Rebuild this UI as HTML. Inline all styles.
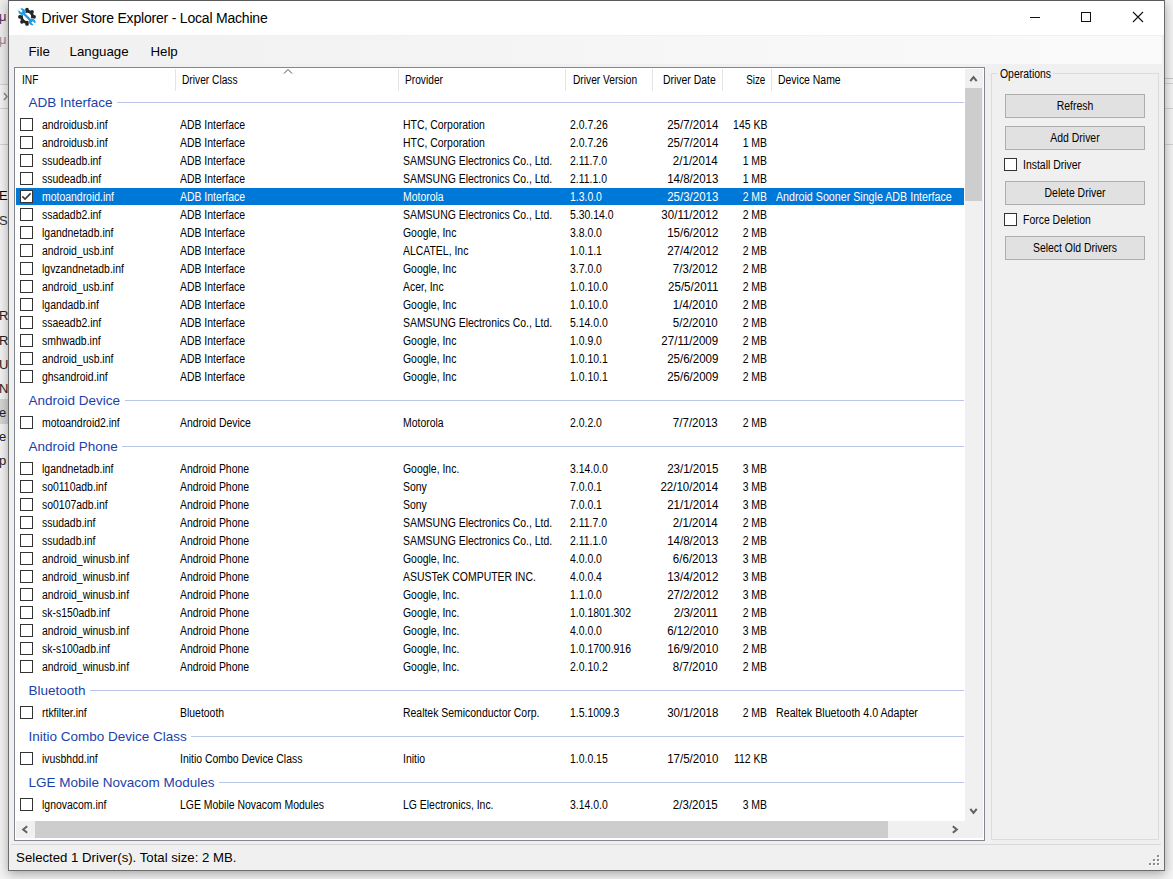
<!DOCTYPE html>
<html><head><meta charset="utf-8"><style>
html,body{margin:0;padding:0;}
body{width:1173px;height:879px;overflow:hidden;position:relative;background:#efefef;font-family:"Liberation Sans",sans-serif;color:#000;}
.abs{position:absolute;box-sizing:content-box;}
.clip{overflow:hidden;}
.tx{position:absolute;white-space:nowrap;color:#000;}
.gh{position:absolute;z-index:2;background:#fff;padding-right:4.5px;padding-left:12.5px;left:16px;font-size:13.5px;line-height:13.5px;color:#1b3faa;white-space:nowrap;transform:translateY(-11.4px);}
.gl{position:absolute;left:16px;width:948px;height:1px;background:#b9c6e8;}
.row{position:absolute;left:0;width:1173px;height:18px;}
.row .t{position:absolute;top:0;font-size:12px;line-height:19px;white-space:nowrap;color:#000;transform:scaleX(0.87);transform-origin:0 0;}
.row .t.r{transform-origin:100% 0;}
.row .t.d{transform:scaleX(0.96);}
.row .t.dv{transform:scaleX(0.89);}
.row.sel::before{content:"";position:absolute;left:16px;width:948px;top:0;height:17px;background:#0078d7;}
.row.sel .t{color:#fff;}
.cb{position:absolute;left:20px;top:2px;width:11px;height:11px;border:1px solid #333;background:#fff;}
.ckm{position:absolute;left:20px;top:2px;}
.btn{background:#e1e1e1;border:1px solid #adadad;}
.cbx{width:11px;height:11px;border:1px solid #333;background:#fff;}
</style></head><body>
<div class="abs" style="left:0px;top:0px;width:8px;height:879px;background:#f3f3f3;"></div>
<div class="abs" style="left:1165px;top:0px;width:8px;height:879px;background:#f2f2f2;"></div>
<div class="abs" style="left:0px;top:871px;width:1173px;height:8px;background:#f4f4f4;"></div>
<div class="abs" style="left:0px;top:0px;width:8px;height:84px;background:#ececec;"></div>
<div class="abs" style="left:0px;top:84px;width:8px;height:1px;background:#d2d2d2;"></div>
<div class="abs" style="left:0px;top:108px;width:8px;height:1px;background:#d2d2d2;"></div>
<div class="abs" style="left:0px;top:144px;width:8px;height:1px;background:#d2d2d2;"></div>
<svg class="abs" style="left:0;top:90px" width="8" height="12" viewBox="0 0 8 12"><path d="M4,3 L7,6.5 L4,10" fill="none" stroke="#8a8a8a" stroke-width="1.5"/></svg>
<div class="abs" style="left:0px;top:399px;width:8px;height:25px;background:#d4d4d4;"></div>
<div class="tx" style="left:-1px;top:10.00px;font-size:13px;line-height:13px;color:#503060;">μ</div>
<div class="tx" style="left:-1px;top:33.00px;font-size:13px;line-height:13px;color:#9a8a90;">μ</div>
<div class="tx" style="left:-1px;top:189.00px;font-size:13px;line-height:13px;color:#000;">E</div>
<div class="tx" style="left:-1px;top:214.00px;font-size:13px;line-height:13px;color:#333;">S</div>
<div class="tx" style="left:-1px;top:309.00px;font-size:13px;line-height:13px;color:#222;">R</div>
<div class="tx" style="left:-1px;top:334.00px;font-size:13px;line-height:13px;color:#222;">R</div>
<div class="tx" style="left:-1px;top:358.00px;font-size:13px;line-height:13px;color:#222;">U</div>
<div class="tx" style="left:-1px;top:382.00px;font-size:13px;line-height:13px;color:#222;">N</div>
<div class="tx" style="left:-1px;top:406.00px;font-size:13px;line-height:13px;color:#222;">e</div>
<div class="tx" style="left:-1px;top:430.00px;font-size:13px;line-height:13px;color:#222;">e</div>
<div class="tx" style="left:-1px;top:454.00px;font-size:13px;line-height:13px;color:#222;">p</div>
<div class="abs" style="left:1165px;top:78px;width:8px;height:1px;background:#c8c8c8;"></div>
<div class="abs" style="left:1165px;top:83px;width:8px;height:1px;background:#d0d0d0;"></div>
<div class="abs" style="left:1165px;top:108px;width:8px;height:1px;background:#d0d0d0;"></div>
<div class="abs" style="left:1165px;top:144px;width:8px;height:1px;background:#d0d0d0;"></div>
<div class="abs" style="left:8px;top:0;width:1155px;height:869px;border:1px solid #6c6c6c;border-top-color:#5a5a5a;background:#f0f0f0;box-shadow:0 3px 10px rgba(0,0,0,0.32)"></div>
<div class="abs" style="left:9px;top:1px;width:1155px;height:34px;background:#fff;"></div>
<svg class="abs" style="left:17px;top:7px" width="20" height="20" viewBox="0 0 20 20">
<g transform="translate(10,9.8)">
<circle r="5.6" fill="none" stroke="#262626" stroke-width="2.9"/>
<g fill="#262626"><circle cx="7.10" cy="0.00" r="1.85"/><circle cx="5.02" cy="5.02" r="1.85"/><circle cx="0.00" cy="7.10" r="1.85"/><circle cx="-5.02" cy="5.02" r="1.85"/><circle cx="-7.10" cy="0.00" r="1.85"/><circle cx="-5.02" cy="-5.02" r="1.85"/><circle cx="-0.00" cy="-7.10" r="1.85"/><circle cx="5.02" cy="-5.02" r="1.85"/></g>
<g transform="rotate(-45)">
<g fill="#fff"><rect x="-1.6" y="-7" width="3.2" height="14"/><circle cx="0" cy="-7.4" r="3.6"/><circle cx="0" cy="7.4" r="3.6"/></g>
<g fill="#1a9be8"><rect x="-1.15" y="-7" width="2.3" height="14"/><circle cx="0" cy="-7.4" r="3.2"/><circle cx="0" cy="7.4" r="3.2"/></g>
<g fill="#fff"><rect x="-1.1" y="-11" width="2.2" height="3.9" rx="0.5"/><rect x="-1.1" y="7.1" width="2.2" height="3.9" rx="0.5"/></g>
</g>
</g></svg>
<div class="tx" style="left:41.5px;top:10.95px;font-size:14px;line-height:14px;letter-spacing:-0.2px;color:#000;">Driver Store Explorer - Local Machine</div>
<div class="abs" style="left:1030px;top:17px;width:10px;height:1px;background:#111;"></div>
<div class="abs" style="left:1081px;top:12px;width:8px;height:8px;border:1px solid #111"></div>
<svg class="abs" style="left:1132px;top:11px" width="12" height="12" viewBox="0 0 12 12"><path d="M1 1L11 11M11 1L1 11" stroke="#111" stroke-width="1.1"/></svg>
<div class="abs" style="left:9px;top:35px;width:1155px;height:29px;background:#f0f0f0;"></div>
<div class="abs" style="left:9px;top:36px;width:1153px;height:28px;background:linear-gradient(90deg,#f0f0f0 0,#f3f3f3 30%,#f7f7f7 60%,#fafafa 100%);"></div>
<div class="tx" style="left:28.4px;top:44.64px;font-size:13.3px;line-height:13.3px;">File</div>
<div class="tx" style="left:69.5px;top:44.64px;font-size:13.3px;line-height:13.3px;">Language</div>
<div class="tx" style="left:150.4px;top:44.64px;font-size:13.3px;line-height:13.3px;">Help</div>
<div class="abs" style="left:14px;top:67px;width:969px;height:772px;border:1px solid #828790;background:#fff"></div>
<div class="abs" style="left:175px;top:69px;width:1px;height:22px;background:#e5e5e5;"></div>
<div class="abs" style="left:398px;top:69px;width:1px;height:22px;background:#e5e5e5;"></div>
<div class="abs" style="left:565px;top:69px;width:1px;height:22px;background:#e5e5e5;"></div>
<div class="abs" style="left:652px;top:69px;width:1px;height:22px;background:#e5e5e5;"></div>
<div class="abs" style="left:722px;top:69px;width:1px;height:22px;background:#e5e5e5;"></div>
<div class="abs" style="left:771px;top:69px;width:1px;height:22px;background:#e5e5e5;"></div>
<div class="tx" style="left:22px;top:73.84px;font-size:12px;line-height:12px;transform:scaleX(0.85);transform-origin:0 0;">INF</div>
<div class="tx" style="left:182px;top:73.84px;font-size:12px;line-height:12px;transform:scaleX(0.85);transform-origin:0 0;">Driver Class</div>
<div class="tx" style="left:404.8px;top:73.84px;font-size:12px;line-height:12px;transform:scaleX(0.85);transform-origin:0 0;">Provider</div>
<div class="tx" style="left:572.5px;top:73.84px;font-size:12px;line-height:12px;transform:scaleX(0.85);transform-origin:0 0;">Driver Version</div>
<div class="tx" style="left:662.7px;top:73.84px;font-size:12px;line-height:12px;transform:scaleX(0.87);transform-origin:0 0;">Driver Date</div>
<div class="tx" style="right:408px;top:73.84px;font-size:12px;line-height:12px;transform:scaleX(0.82);transform-origin:100% 0;">Size</div>
<div class="tx" style="left:778px;top:73.84px;font-size:12px;line-height:12px;transform:scaleX(0.87);transform-origin:0 0;">Device Name</div>
<svg class="abs" style="left:283px;top:68px" width="10" height="7" viewBox="0 0 10 7"><path d="M1 5.5L5 1.5L9 5.5" fill="none" stroke="#4a4a4a" stroke-width="1"/></svg>
<div class="abs clip" style="left:16px;top:69px;width:949px;height:752px">
<div class="abs" style="left:-16px;top:-69px;width:1173px;height:879px">
<div class="gh" style="top:107px">ADB Interface</div>
<div class="gl" style="top:102px"></div>
<div class="row" style="top:116px"><span class="cb"></span><span class="t" style="left:41.5px">androidusb.inf</span><span class="t" style="left:180px">ADB Interface</span><span class="t" style="left:403px">HTC, Corporation</span><span class="t" style="left:570px">2.0.7.26</span><span class="t r d" style="right:455px">25/7/2014</span><span class="t r" style="right:406px">145 KB</span></div>
<div class="row" style="top:134px"><span class="cb"></span><span class="t" style="left:41.5px">androidusb.inf</span><span class="t" style="left:180px">ADB Interface</span><span class="t" style="left:403px">HTC, Corporation</span><span class="t" style="left:570px">2.0.7.26</span><span class="t r d" style="right:455px">25/7/2014</span><span class="t r" style="right:406px">1 MB</span></div>
<div class="row" style="top:152px"><span class="cb"></span><span class="t" style="left:41.5px">ssudeadb.inf</span><span class="t" style="left:180px">ADB Interface</span><span class="t" style="left:403px">SAMSUNG Electronics Co., Ltd.</span><span class="t" style="left:570px">2.11.7.0</span><span class="t r d" style="right:455px">2/1/2014</span><span class="t r" style="right:406px">1 MB</span></div>
<div class="row" style="top:170px"><span class="cb"></span><span class="t" style="left:41.5px">ssudeadb.inf</span><span class="t" style="left:180px">ADB Interface</span><span class="t" style="left:403px">SAMSUNG Electronics Co., Ltd.</span><span class="t" style="left:570px">2.11.1.0</span><span class="t r d" style="right:455px">14/8/2013</span><span class="t r" style="right:406px">1 MB</span></div>
<div class="row sel" style="top:188px"><span class="cb"></span><svg class="ckm" width="13" height="13" viewBox="0 0 13 13"><path d="M2.3,6.4 L5,9.1 L10.6,3.4" fill="none" stroke="#3a3a3a" stroke-width="1.5"/></svg><span class="t" style="left:41.5px">motoandroid.inf</span><span class="t" style="left:180px">ADB Interface</span><span class="t" style="left:403px">Motorola</span><span class="t" style="left:570px">1.3.0.0</span><span class="t r d" style="right:455px">25/3/2013</span><span class="t r" style="right:406px">2 MB</span><span class="t dv" style="left:776px">Android Sooner Single ADB Interface</span></div>
<div class="row" style="top:206px"><span class="cb"></span><span class="t" style="left:41.5px">ssadadb2.inf</span><span class="t" style="left:180px">ADB Interface</span><span class="t" style="left:403px">SAMSUNG Electronics Co., Ltd.</span><span class="t" style="left:570px">5.30.14.0</span><span class="t r d" style="right:455px">30/11/2012</span><span class="t r" style="right:406px">2 MB</span></div>
<div class="row" style="top:224px"><span class="cb"></span><span class="t" style="left:41.5px">lgandnetadb.inf</span><span class="t" style="left:180px">ADB Interface</span><span class="t" style="left:403px">Google, Inc</span><span class="t" style="left:570px">3.8.0.0</span><span class="t r d" style="right:455px">15/6/2012</span><span class="t r" style="right:406px">2 MB</span></div>
<div class="row" style="top:242px"><span class="cb"></span><span class="t" style="left:41.5px">android_usb.inf</span><span class="t" style="left:180px">ADB Interface</span><span class="t" style="left:403px">ALCATEL, Inc</span><span class="t" style="left:570px">1.0.1.1</span><span class="t r d" style="right:455px">27/4/2012</span><span class="t r" style="right:406px">2 MB</span></div>
<div class="row" style="top:260px"><span class="cb"></span><span class="t" style="left:41.5px">lgvzandnetadb.inf</span><span class="t" style="left:180px">ADB Interface</span><span class="t" style="left:403px">Google, Inc</span><span class="t" style="left:570px">3.7.0.0</span><span class="t r d" style="right:455px">7/3/2012</span><span class="t r" style="right:406px">2 MB</span></div>
<div class="row" style="top:278px"><span class="cb"></span><span class="t" style="left:41.5px">android_usb.inf</span><span class="t" style="left:180px">ADB Interface</span><span class="t" style="left:403px">Acer, Inc</span><span class="t" style="left:570px">1.0.10.0</span><span class="t r d" style="right:455px">25/5/2011</span><span class="t r" style="right:406px">2 MB</span></div>
<div class="row" style="top:296px"><span class="cb"></span><span class="t" style="left:41.5px">lgandadb.inf</span><span class="t" style="left:180px">ADB Interface</span><span class="t" style="left:403px">Google, Inc</span><span class="t" style="left:570px">1.0.10.0</span><span class="t r d" style="right:455px">1/4/2010</span><span class="t r" style="right:406px">2 MB</span></div>
<div class="row" style="top:314px"><span class="cb"></span><span class="t" style="left:41.5px">ssaeadb2.inf</span><span class="t" style="left:180px">ADB Interface</span><span class="t" style="left:403px">SAMSUNG Electronics Co., Ltd.</span><span class="t" style="left:570px">5.14.0.0</span><span class="t r d" style="right:455px">5/2/2010</span><span class="t r" style="right:406px">2 MB</span></div>
<div class="row" style="top:332px"><span class="cb"></span><span class="t" style="left:41.5px">smhwadb.inf</span><span class="t" style="left:180px">ADB Interface</span><span class="t" style="left:403px">Google, Inc</span><span class="t" style="left:570px">1.0.9.0</span><span class="t r d" style="right:455px">27/11/2009</span><span class="t r" style="right:406px">2 MB</span></div>
<div class="row" style="top:350px"><span class="cb"></span><span class="t" style="left:41.5px">android_usb.inf</span><span class="t" style="left:180px">ADB Interface</span><span class="t" style="left:403px">Google, Inc</span><span class="t" style="left:570px">1.0.10.1</span><span class="t r d" style="right:455px">25/6/2009</span><span class="t r" style="right:406px">2 MB</span></div>
<div class="row" style="top:368px"><span class="cb"></span><span class="t" style="left:41.5px">ghsandroid.inf</span><span class="t" style="left:180px">ADB Interface</span><span class="t" style="left:403px">Google, Inc</span><span class="t" style="left:570px">1.0.10.1</span><span class="t r d" style="right:455px">25/6/2009</span><span class="t r" style="right:406px">2 MB</span></div>
<div class="gh" style="top:405px">Android Device</div>
<div class="gl" style="top:400px"></div>
<div class="row" style="top:414px"><span class="cb"></span><span class="t" style="left:41.5px">motoandroid2.inf</span><span class="t" style="left:180px">Android Device</span><span class="t" style="left:403px">Motorola</span><span class="t" style="left:570px">2.0.2.0</span><span class="t r d" style="right:455px">7/7/2013</span><span class="t r" style="right:406px">2 MB</span></div>
<div class="gh" style="top:451px">Android Phone</div>
<div class="gl" style="top:446px"></div>
<div class="row" style="top:460px"><span class="cb"></span><span class="t" style="left:41.5px">lgandnetadb.inf</span><span class="t" style="left:180px">Android Phone</span><span class="t" style="left:403px">Google, Inc.</span><span class="t" style="left:570px">3.14.0.0</span><span class="t r d" style="right:455px">23/1/2015</span><span class="t r" style="right:406px">3 MB</span></div>
<div class="row" style="top:478px"><span class="cb"></span><span class="t" style="left:41.5px">so0110adb.inf</span><span class="t" style="left:180px">Android Phone</span><span class="t" style="left:403px">Sony</span><span class="t" style="left:570px">7.0.0.1</span><span class="t r d" style="right:455px">22/10/2014</span><span class="t r" style="right:406px">3 MB</span></div>
<div class="row" style="top:496px"><span class="cb"></span><span class="t" style="left:41.5px">so0107adb.inf</span><span class="t" style="left:180px">Android Phone</span><span class="t" style="left:403px">Sony</span><span class="t" style="left:570px">7.0.0.1</span><span class="t r d" style="right:455px">21/1/2014</span><span class="t r" style="right:406px">3 MB</span></div>
<div class="row" style="top:514px"><span class="cb"></span><span class="t" style="left:41.5px">ssudadb.inf</span><span class="t" style="left:180px">Android Phone</span><span class="t" style="left:403px">SAMSUNG Electronics Co., Ltd.</span><span class="t" style="left:570px">2.11.7.0</span><span class="t r d" style="right:455px">2/1/2014</span><span class="t r" style="right:406px">2 MB</span></div>
<div class="row" style="top:532px"><span class="cb"></span><span class="t" style="left:41.5px">ssudadb.inf</span><span class="t" style="left:180px">Android Phone</span><span class="t" style="left:403px">SAMSUNG Electronics Co., Ltd.</span><span class="t" style="left:570px">2.11.1.0</span><span class="t r d" style="right:455px">14/8/2013</span><span class="t r" style="right:406px">2 MB</span></div>
<div class="row" style="top:550px"><span class="cb"></span><span class="t" style="left:41.5px">android_winusb.inf</span><span class="t" style="left:180px">Android Phone</span><span class="t" style="left:403px">Google, Inc.</span><span class="t" style="left:570px">4.0.0.0</span><span class="t r d" style="right:455px">6/6/2013</span><span class="t r" style="right:406px">3 MB</span></div>
<div class="row" style="top:568px"><span class="cb"></span><span class="t" style="left:41.5px">android_winusb.inf</span><span class="t" style="left:180px">Android Phone</span><span class="t" style="left:403px">ASUSTeK COMPUTER INC.</span><span class="t" style="left:570px">4.0.0.4</span><span class="t r d" style="right:455px">13/4/2012</span><span class="t r" style="right:406px">3 MB</span></div>
<div class="row" style="top:586px"><span class="cb"></span><span class="t" style="left:41.5px">android_winusb.inf</span><span class="t" style="left:180px">Android Phone</span><span class="t" style="left:403px">Google, Inc.</span><span class="t" style="left:570px">1.1.0.0</span><span class="t r d" style="right:455px">27/2/2012</span><span class="t r" style="right:406px">3 MB</span></div>
<div class="row" style="top:604px"><span class="cb"></span><span class="t" style="left:41.5px">sk-s150adb.inf</span><span class="t" style="left:180px">Android Phone</span><span class="t" style="left:403px">Google, Inc.</span><span class="t" style="left:570px">1.0.1801.302</span><span class="t r d" style="right:455px">2/3/2011</span><span class="t r" style="right:406px">2 MB</span></div>
<div class="row" style="top:622px"><span class="cb"></span><span class="t" style="left:41.5px">android_winusb.inf</span><span class="t" style="left:180px">Android Phone</span><span class="t" style="left:403px">Google, Inc.</span><span class="t" style="left:570px">4.0.0.0</span><span class="t r d" style="right:455px">6/12/2010</span><span class="t r" style="right:406px">3 MB</span></div>
<div class="row" style="top:640px"><span class="cb"></span><span class="t" style="left:41.5px">sk-s100adb.inf</span><span class="t" style="left:180px">Android Phone</span><span class="t" style="left:403px">Google, Inc.</span><span class="t" style="left:570px">1.0.1700.916</span><span class="t r d" style="right:455px">16/9/2010</span><span class="t r" style="right:406px">2 MB</span></div>
<div class="row" style="top:658px"><span class="cb"></span><span class="t" style="left:41.5px">android_winusb.inf</span><span class="t" style="left:180px">Android Phone</span><span class="t" style="left:403px">Google, Inc.</span><span class="t" style="left:570px">2.0.10.2</span><span class="t r d" style="right:455px">8/7/2010</span><span class="t r" style="right:406px">2 MB</span></div>
<div class="gh" style="top:695px">Bluetooth</div>
<div class="gl" style="top:690px"></div>
<div class="row" style="top:704px"><span class="cb"></span><span class="t" style="left:41.5px">rtkfilter.inf</span><span class="t" style="left:180px">Bluetooth</span><span class="t" style="left:403px">Realtek Semiconductor Corp.</span><span class="t" style="left:570px">1.5.1009.3</span><span class="t r d" style="right:455px">30/1/2018</span><span class="t r" style="right:406px">2 MB</span><span class="t dv" style="left:776px">Realtek Bluetooth 4.0 Adapter</span></div>
<div class="gh" style="top:741px">Initio Combo Device Class</div>
<div class="gl" style="top:736px"></div>
<div class="row" style="top:750px"><span class="cb"></span><span class="t" style="left:41.5px">ivusbhdd.inf</span><span class="t" style="left:180px">Initio Combo Device Class</span><span class="t" style="left:403px">Initio</span><span class="t" style="left:570px">1.0.0.15</span><span class="t r d" style="right:455px">17/5/2010</span><span class="t r" style="right:406px">112 KB</span></div>
<div class="gh" style="top:787px">LGE Mobile Novacom Modules</div>
<div class="gl" style="top:782px"></div>
<div class="row" style="top:796px"><span class="cb"></span><span class="t" style="left:41.5px">lgnovacom.inf</span><span class="t" style="left:180px">LGE Mobile Novacom Modules</span><span class="t" style="left:403px">LG Electronics, Inc.</span><span class="t" style="left:570px">3.14.0.0</span><span class="t r d" style="right:455px">2/3/2015</span><span class="t r" style="right:406px">3 MB</span></div>
</div></div>
<div class="abs" style="left:965px;top:69px;width:18px;height:752px;background:#f0f0f0;"></div>
<div class="abs" style="left:965px;top:88px;width:17px;height:113px;background:#cdcdcd;"></div>
<div class="abs" style="left:16px;top:821px;width:949px;height:17px;background:#f0f0f0;"></div>
<div class="abs" style="left:35px;top:821px;width:853px;height:17px;background:#cdcdcd;"></div>
<div class="abs" style="left:965px;top:821px;width:18px;height:17px;background:#f0f0f0;"></div>
<svg class="abs" style="left:0;top:0;z-index:5" width="1173" height="879" viewBox="0 0 1173 879"><g fill="none" stroke="#606060" stroke-width="2" stroke-linejoin="miter">
<path d="M970.3,81.2 L973.5,77.2 L976.7,81.2"/>
<path d="M970.3,808.8 L973.5,812.8 L976.7,808.8"/>
<path d="M952.8,826.3 L956.8,829.5 L952.8,832.7"/>
<path d="M27.2,826.3 L23.2,829.5 L27.2,832.7"/>
</g></svg>
<div class="abs" style="left:991px;top:73px;width:166px;height:765px;border:1px solid #dcdcdc"></div>
<div class="abs" style="left:997px;top:66px;width:56px;height:14px;background:#f0f0f0;"></div>
<div class="tx" style="left:999.6px;top:67.54px;font-size:12px;line-height:12px;transform:scaleX(0.87);transform-origin:0 0;">Operations</div>
<div class="abs btn" style="left:1005px;top:94px;width:138px;height:22px"></div><div class="tx" style="left:1075px;top:99.84px;font-size:12px;line-height:12px;transform:translateX(-50%) scaleX(0.87);transform-origin:50% 0;">Refresh</div>
<div class="abs btn" style="left:1005px;top:126px;width:138px;height:22px"></div><div class="tx" style="left:1075px;top:131.84px;font-size:12px;line-height:12px;transform:translateX(-50%) scaleX(0.87);transform-origin:50% 0;">Add Driver</div>
<div class="abs cbx" style="left:1004px;top:158px"></div>
<div class="tx" style="left:1023.2px;top:159.04px;font-size:12px;line-height:12px;transform:scaleX(0.87);transform-origin:0 0;">Install Driver</div>
<div class="abs btn" style="left:1005px;top:181px;width:138px;height:22px"></div><div class="tx" style="left:1075px;top:186.84px;font-size:12px;line-height:12px;transform:translateX(-50%) scaleX(0.87);transform-origin:50% 0;">Delete Driver</div>
<div class="abs cbx" style="left:1004px;top:213px"></div>
<div class="tx" style="left:1023.2px;top:214.04px;font-size:12px;line-height:12px;transform:scaleX(0.87);transform-origin:0 0;">Force Deletion</div>
<div class="abs btn" style="left:1005px;top:236px;width:138px;height:22px"></div><div class="tx" style="left:1075px;top:241.84px;font-size:12px;line-height:12px;transform:translateX(-50%) scaleX(0.87);transform-origin:50% 0;">Select Old Drivers</div>
<div class="abs" style="left:11px;top:844px;width:1150px;height:1px;background:#d7d7d7;"></div>
<div class="tx" style="left:16.1px;top:851.43px;font-size:13.2px;line-height:13.2px;">Selected 1 Driver(s). Total size: 2 MB.</div>
<div class="abs" style="left:1158px;top:856px;width:2px;height:2px;background:#fff;"></div>
<div class="abs" style="left:1157px;top:855px;width:2px;height:2px;background:#8c8c8c;"></div>
<div class="abs" style="left:1154px;top:860px;width:2px;height:2px;background:#fff;"></div>
<div class="abs" style="left:1153px;top:859px;width:2px;height:2px;background:#8c8c8c;"></div>
<div class="abs" style="left:1158px;top:860px;width:2px;height:2px;background:#fff;"></div>
<div class="abs" style="left:1157px;top:859px;width:2px;height:2px;background:#8c8c8c;"></div>
<div class="abs" style="left:1150px;top:864px;width:2px;height:2px;background:#fff;"></div>
<div class="abs" style="left:1149px;top:863px;width:2px;height:2px;background:#8c8c8c;"></div>
<div class="abs" style="left:1154px;top:864px;width:2px;height:2px;background:#fff;"></div>
<div class="abs" style="left:1153px;top:863px;width:2px;height:2px;background:#8c8c8c;"></div>
<div class="abs" style="left:1158px;top:864px;width:2px;height:2px;background:#fff;"></div>
<div class="abs" style="left:1157px;top:863px;width:2px;height:2px;background:#8c8c8c;"></div>
</body></html>
